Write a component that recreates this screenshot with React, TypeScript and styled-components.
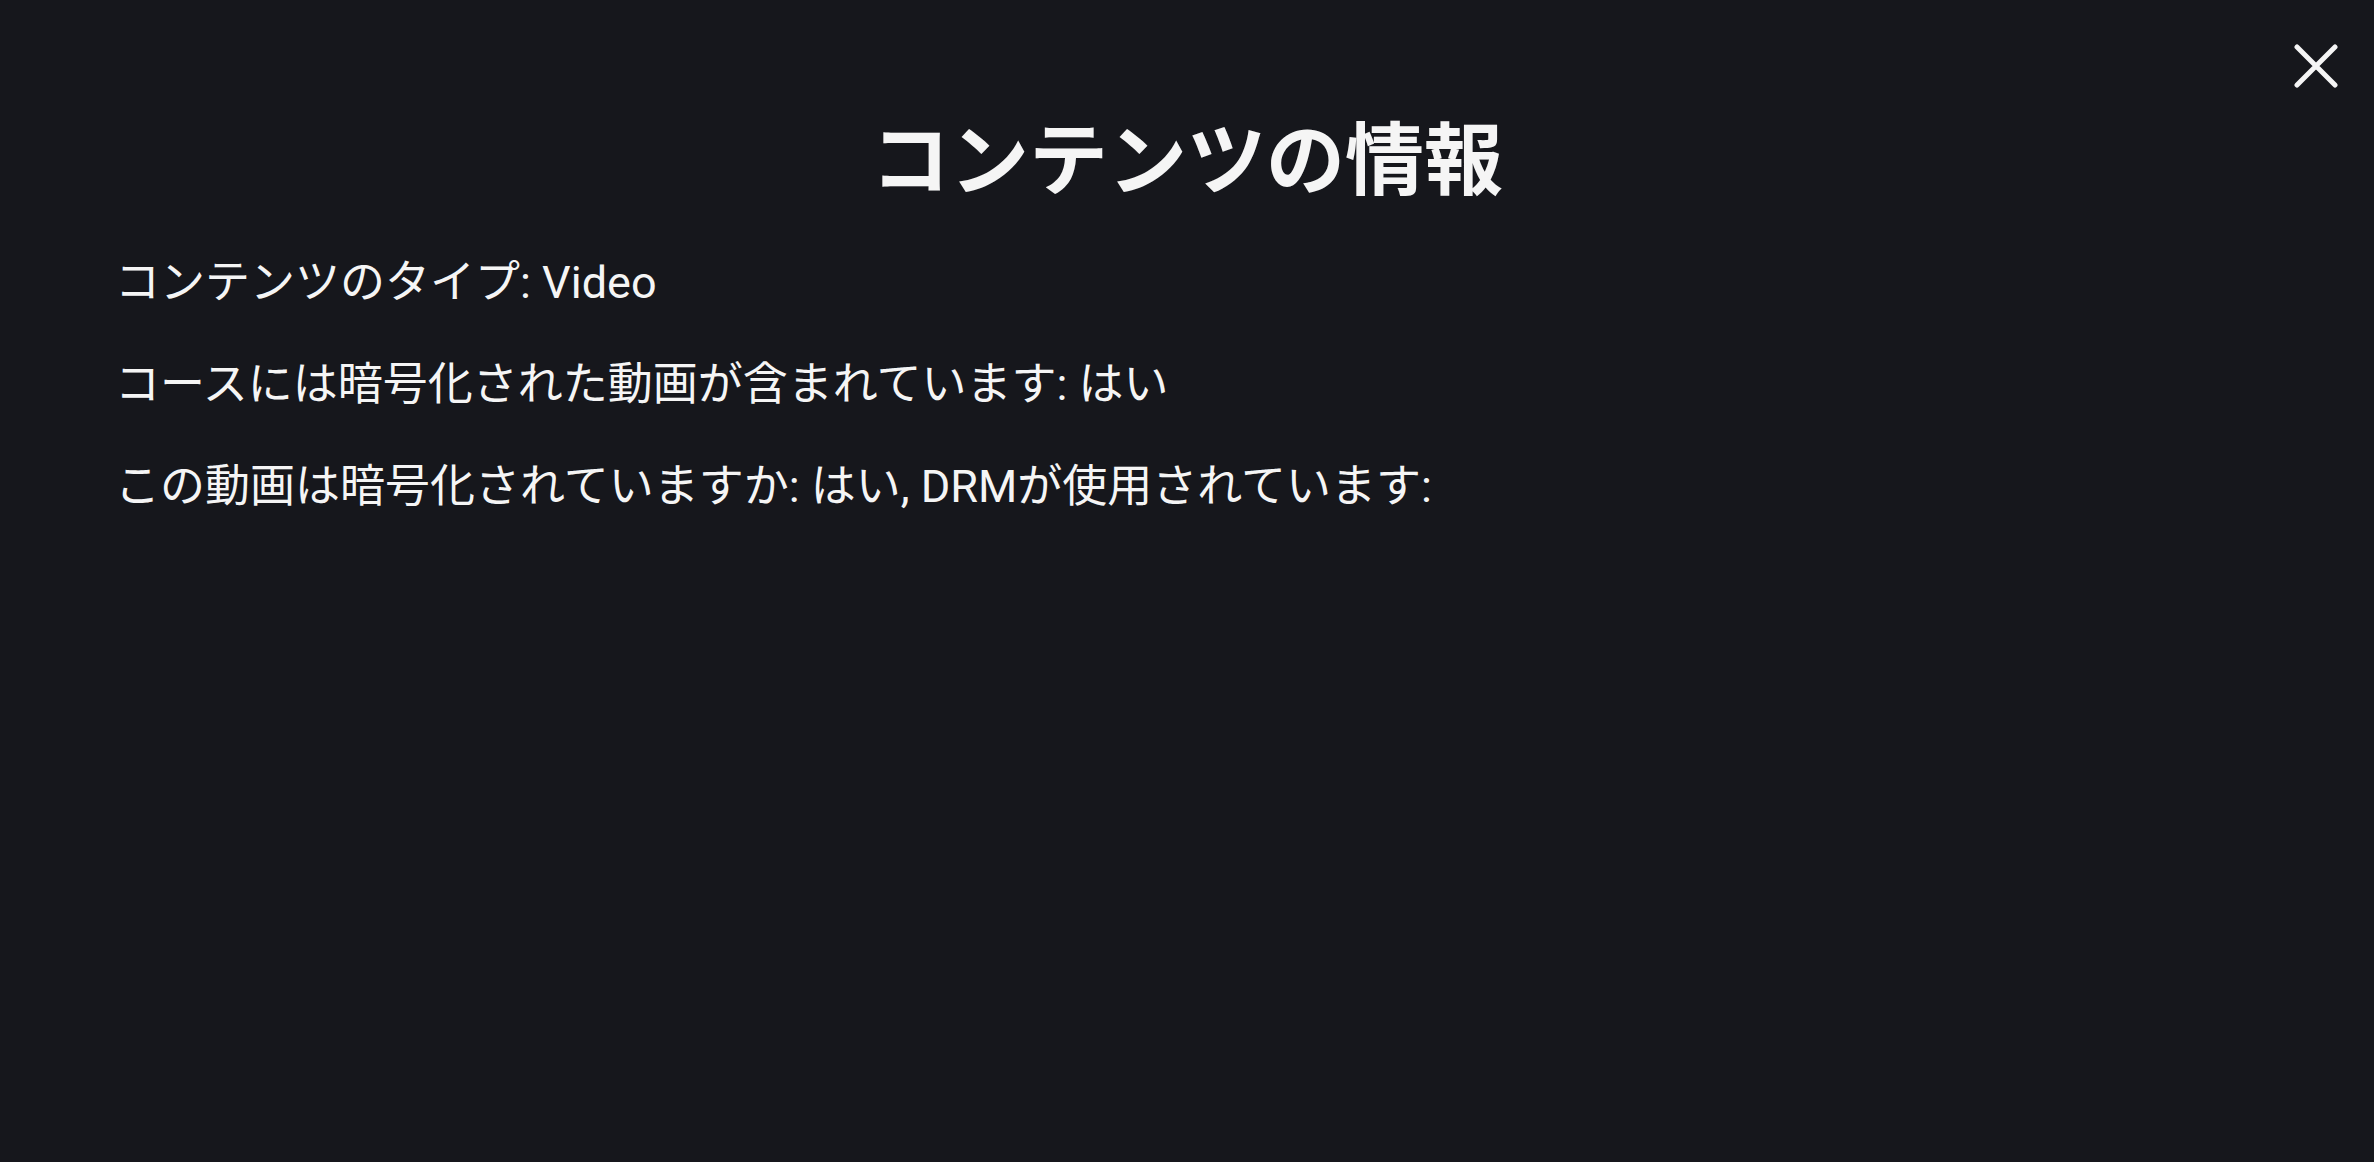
import React from "react";
import styled, { createGlobalStyle } from "styled-components";

const Global = createGlobalStyle`
  html, body {
    margin: 0;
    padding: 0;
    background: #16171c;
    height: 100%;
  }
  body {
    font-family: Roboto, "Noto Sans CJK JP", sans-serif;
    color: #f5f5f5;
  }
`;

const Page = styled.div`
  position: relative;
  min-height: 1162px;
  box-sizing: border-box;
  padding: 115px 115px 0 115px;
  background: #16171c;
`;

const CloseButton = styled.button`
  position: absolute;
  top: 40px;
  right: 32px;
  width: 52px;
  height: 52px;
  padding: 0;
  border: none;
  background: transparent;
  display: flex;
  align-items: center;
  justify-content: center;
  cursor: pointer;
`;

const Title = styled.h1`
  margin: 0 0 39px 0;
  text-align: center;
  font-size: 79px;
  line-height: 95px;
  font-weight: 700;
  color: #f5f5f5;
`;

const InfoList = styled.div`
  display: flex;
  flex-direction: column;
  gap: 34.5px;
`;

const InfoLine = styled.p`
  margin: 0;
  font-size: 45px;
  line-height: 67.5px;
  font-weight: 400;
  color: #f5f5f5;
`;

export default function App() {
  return (
    <>
      <Global />
      <Page>
        <CloseButton aria-label="閉じる">
          <svg width="44" height="44" viewBox="0 0 44 44" fill="none">
            <path
              d="M3 3 L41 41 M41 3 L3 41"
              stroke="#f5f5f5"
              strokeWidth="5"
              strokeLinecap="round"
            />
          </svg>
        </CloseButton>
        <Title>コンテンツの情報</Title>
        <InfoList>
          <InfoLine>コンテンツのタイプ: Video</InfoLine>
          <InfoLine>コースには暗号化された動画が含まれています: はい</InfoLine>
          <InfoLine>この動画は暗号化されていますか: はい, DRMが使用されています:</InfoLine>
        </InfoList>
      </Page>
    </>
  );
}
